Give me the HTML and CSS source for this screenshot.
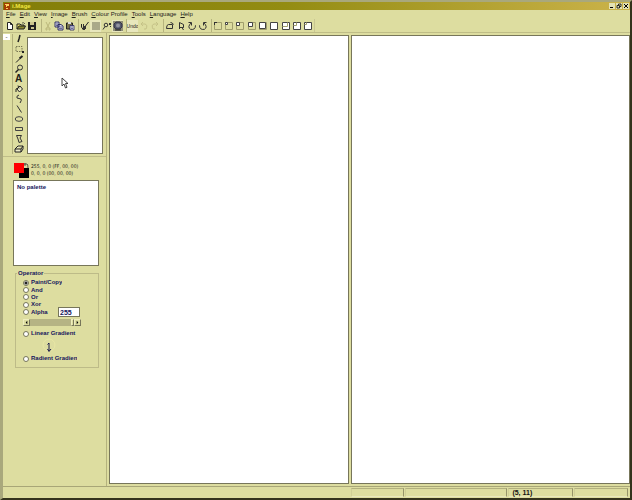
FILE: index.html
```html
<!DOCTYPE html>
<html lang="en">
<head>
<meta charset="utf-8">
<title>i.Mage</title>
<link rel="stylesheet" href="styles.css">
</head>
<body>
<div class="window">
  <header class="titlebar">
    <svg class="logo" viewBox="0 0 6 7"><path fill="#a43c00" d="M0 0h6v7H0z"/><path fill="#ffd060" d="M1 1h4v2H3v1H2V2H1zM2 5h2v1H2z"/></svg>
    <h1>i.Mage</h1>
    <div class="controls">
      <button aria-label="Minimise"><svg viewBox="0 0 6 6"><path d="M1 4h3v1H1z"/></svg></button>
      <button aria-label="Restore"><svg viewBox="0 0 6 6"><path fill="none" stroke="#000" stroke-width=".8" d="M2.500 2V1H5v2.500H4M1 2.500h2.500V5H1z"/></svg></button>
      <button aria-label="Close"><svg viewBox="0 0 6 6"><path stroke="#000" d="M1 1l4 4M5 1L1 5"/></svg></button>
    </div>
  </header>
  <nav class="menu">
    <a href="#"><u>F</u>ile</a><a href="#"><u>E</u>dit</a><a href="#"><u>V</u>iew</a><a href="#"><u>I</u>mage</a><a href="#"><u>B</u>rush</a><a href="#"><u>C</u>olour Profile</a><a href="#"><u>T</u>ools</a><a href="#"><u>L</u>anguage</a><a href="#"><u>H</u>elp</a>
  </nav>
  <div class="toolbar">
    <div class="group three">
      <button aria-label="New"><svg viewBox="0 0 10 10"><path fill="#fff" stroke="#222" d="M2.500 1.500h3l2 2v5h-5z"/><path fill="none" stroke="#222" d="M5.500 1.500v2h2"/></svg></button>
      <button aria-label="Open"><svg viewBox="0 0 10 10"><path fill="#e8e070" stroke="#222" d="M1 8V3h3l1 1h3v1.500"/><path fill="#89852c" stroke="#222" d="M1 8l2-3h6.500L8 8z"/><path fill="none" stroke="#222" stroke-width=".7" d="M6 2q2-1 3 1"/></svg></button>
      <button aria-label="Save"><svg viewBox="0 0 10 10"><path fill="#222" d="M1 1h8v8H1z"/><path fill="#ccc68e" d="M3 1h4v3H3zM4 6h3v2H4z"/></svg></button>
    </div>
    <div class="group three">
      <button aria-label="Cut"><svg viewBox="0 0 10 10"><path fill="none" stroke="#bcb97c" d="M3 1l3 6M7 1L4 7M3 7h1v2H3zM6 7h1v2H6z"/></svg></button>
      <button aria-label="Copy"><svg viewBox="0 0 10 10"><path fill="#d8d8e8" stroke="#23235e" stroke-width=".9" d="M1 1h4v5H1zM4 3.500h3l2 1.500v4H4z"/><path stroke="#23235e" stroke-width=".6" d="M2 3h2M2 4.500h2M5 6h3M5 7.500h3"/></svg></button>
      <button aria-label="Paste"><svg viewBox="0 0 10 10"><path fill="#77734a" stroke="#222" d="M1.500 2h6v6h-6z"/><path fill="#ddd" d="M3 1h3v2H3z"/><path fill="#e0e0ee" stroke="#23235e" stroke-width=".8" d="M5 4.500h4V9H5z"/><path stroke="#23235e" stroke-width=".6" d="M6 6h2M6 7.500h2"/></svg></button>
    </div>
    <div class="group four">
      <button aria-label="Brush"><svg viewBox="0 0 10 10"><path fill="none" stroke="#222" d="M1.500 3v3l2 3M8.500 1L5.500 5"/><path fill="#333" d="M3 3h1v2h2v3H5v1H3z"/></svg></button>
      <button class="raised" aria-label="Grid"><svg viewBox="0 0 10 10"><path fill="#aaa98a" d="M1 1h8v8H1z"/></svg></button>
      <button aria-label="Zoom"><svg viewBox="0 0 10 10"><path fill="none" stroke="#333" d="M1 8.500l2-3"/><circle cx="4" cy="4" r="1.800" fill="none" stroke="#333"/><path fill="#333" d="M7 2h2v2H7zM8 5h1v1H8z"/></svg></button>
      <button class="raised" aria-label="Screen"><svg viewBox="0 0 10 10"><path fill="#8f8e78" d="M0 0h10v10H0z"/><path fill="#55586c" stroke="#26263c" stroke-width=".8" d="M3 1h4l2 2v3L7 8H3L1 6V3z"/><circle cx="5" cy="4.500" r="2" fill="#9293a0"/><path stroke="#222" d="M2 9h6"/></svg></button>
    </div>
    <div class="group three">
      <button class="raised undo" aria-label="Undo history">Undo</button>
      <button aria-label="Undo"><svg viewBox="0 0 10 10"><path fill="none" stroke="#c5c287" d="M4 1L2 3l2 2M2 3h4q3 1 1 5H5"/></svg></button>
      <button aria-label="Redo"><svg viewBox="0 0 10 10"><path fill="none" stroke="#c5c287" d="M6 1l2 2-2 2M8 3H4q-3 1-1 5h2"/></svg></button>
    </div>
    <div class="group four">
      <button aria-label="Flip horizontally"><svg viewBox="0 0 10 10"><path fill="none" stroke="#333" d="M1.500 7.500h6M1.500 7.500q0-4 2-4h4v4M5.500 1.500q2 0 3 2"/></svg></button>
      <button aria-label="Flip vertically"><svg viewBox="0 0 10 10"><path fill="none" stroke="#333" d="M3.500 8V1.500l4 2v3h-4M6 6.500l1.500 2.500"/></svg></button>
      <button aria-label="Rotate left"><svg viewBox="0 0 10 10"><path fill="none" stroke="#333" d="M1.500 1.500h3v3M4 2Q0 6 3.500 8.300q5 1 5-4"/></svg></button>
      <button aria-label="Rotate right"><svg viewBox="0 0 10 10"><path fill="none" stroke="#333" d="M8.500 1.500h-3v3M6 2q4 4 .5 6.300-5 1-5-4"/></svg></button>
    </div>
    <div class="group nine">
      <button aria-label="Top left, small"><svg viewBox="0 0 10 10"><path class="ghost" d="M1.500 1.500h7v7h-7z"/><path fill="#333" d="M1 1h3v1H2v2H1z"/></svg></button>
      <button aria-label="Top, small"><svg viewBox="0 0 10 10"><path class="ghost" d="M1.500 1.500h7v7h-7z"/><path class="box" d="M1.500 1.500h2v2h-2z"/></svg></button>
      <button aria-label="Size 3"><svg viewBox="0 0 10 10"><path class="ghost" d="M1.500 1.500h7v7h-7z"/><path class="box" d="M1.500 1.500h3v3h-3z"/></svg></button>
      <button aria-label="Size 4"><svg viewBox="0 0 10 10"><path class="ghost" d="M1.500 1.500h7v7h-7z"/><path class="box" d="M1.500 1.500h4v4h-4z"/></svg></button>
      <button aria-label="Size 5"><svg viewBox="0 0 10 10"><path class="ghost" d="M1.500 1.500h7v7h-7z"/><path class="box" d="M1.500 1.500h6v6h-6z"/></svg></button>
      <button aria-label="Size 6"><svg viewBox="0 0 10 10"><path class="box" d="M1.500 1.500h7v7h-7z"/></svg></button>
      <button aria-label="Size 7"><svg viewBox="0 0 10 10"><path class="box" d="M1.500 1.500h7v7h-7z"/><path class="ghost" d="M1.500 5.500h5v-4"/></svg></button>
      <button aria-label="Size 8"><svg viewBox="0 0 10 10"><path class="box" d="M1.500 1.500h7v7h-7z"/><path class="ghost" d="M1.500 4.500h3v-3"/></svg></button>
      <button aria-label="Size 9"><svg viewBox="0 0 10 10"><path class="box" d="M1.500 1.500h7v7h-7z"/><path class="ghost" d="M1.500 3.500h2v-2"/></svg></button>
    </div>
  </div>
  <main class="work">
    <aside class="side">
      <section class="dock">
        <button class="collapse" aria-label="Collapse">-</button>
        <div class="tools">
          <button aria-label="Brush"><svg viewBox="0 0 10 10"><path stroke="#222" stroke-width="1.500" d="M6 1L5 5 4 8"/></svg></button>
          <button aria-label="Select"><svg viewBox="0 0 10 10"><path fill="none" stroke="#777652" stroke-dasharray="1.500 1" d="M2 2.500h6v5H2z"/><path fill="#222" d="M8 7h2v2H8z"/></svg></button>
          <button aria-label="Pick colour"><svg viewBox="0 0 10 10"><path stroke="#222" d="M2 8.500l4-4"/><path stroke="#222" stroke-width="2" d="M5.500 4.500L8.500 2"/></svg></button>
          <button aria-label="Magnify"><svg viewBox="0 0 10 10"><circle cx="6" cy="3.500" r="2.500" fill="none" stroke="#333"/><path stroke="#222" stroke-width="1.400" d="M4.500 5.500L1.500 8.500"/></svg></button>
          <button class="letter" aria-label="Text">A</button>
          <button aria-label="Fill"><svg viewBox="0 0 10 10"><path fill="#efeec8" stroke="#222" d="M3 5l3-3 2.500 3-3 3z"/><path fill="none" stroke="#222" d="M4 1.500l1 3M4 4L2 5v3"/></svg></button>
          <button aria-label="Freehand"><svg viewBox="0 0 10 10"><path fill="none" stroke="#333" d="M5 1Q2 2 3 4l4 1q1 1-1 4"/></svg></button>
          <button aria-label="Line"><svg viewBox="0 0 10 10"><path stroke="#333" d="M3 1.500l4.500 7"/></svg></button>
          <button aria-label="Ellipse"><svg viewBox="0 0 10 10"><ellipse cx="5" cy="5" rx="3.800" ry="2.300" fill="none" stroke="#444"/></svg></button>
          <button aria-label="Rectangle"><svg viewBox="0 0 10 10"><path fill="none" stroke="#444" d="M1.500 3.500h7v3h-7z"/></svg></button>
          <button aria-label="Polygon"><svg viewBox="0 0 10 10"><path fill="none" stroke="#333" d="M2.500 1.500h5L6 4l2 3.500-3 1L4 5z"/></svg></button>
          <button aria-label="Block"><svg viewBox="0 0 10 10"><path fill="#eeedc8" stroke="#222" d="M1 5l3-3h5v3L7 8H1zM1 5h6l2-3M7 5v3"/></svg></button>
        </div>
        <div class="preview"><svg class="cursor" viewBox="0 0 8 12"><path fill="#fff" stroke="#333" stroke-width=".9" d="M1 1v8l2-2 1.500 4L6 10.300 4.500 6.500H7z"/></svg></div>
      </section>
      <section class="colours">
        <div class="swatches"><i class="back"></i><i class="front"></i><svg class="swap" viewBox="0 0 5 5"><path fill="none" stroke="#333" stroke-width=".8" d="M1 0v3M0 1h3q1 0 1 4"/></svg></div>
        <p>255, 0, 0 (FF, 00, 00)<br>0, 0, 0 (00, 00, 00)</p>
      </section>
      <section class="palette">No palette</section>
      <fieldset class="operator">
        <legend>Operator</legend>
        <div class="modes">
          <label><input type="radio" name="op" checked><span>Paint/Copy</span></label>
          <label><input type="radio" name="op"><span>And</span></label>
          <label><input type="radio" name="op"><span>Or</span></label>
          <label><input type="radio" name="op"><span>Xor</span></label>
          <label><input type="radio" name="op"><span>Alpha</span></label>
          <input class="alpha" type="text" value="255" aria-label="Alpha value">
        </div>
        <div class="scroll">
          <button aria-label="Less"><svg viewBox="0 0 6 6"><path d="M4 1v4L2 3z"/></svg></button>
          <span></span>
          <button class="thumb" aria-label="Thumb"></button>
          <button aria-label="More"><svg viewBox="0 0 6 6"><path d="M2 1v4l2-2z"/></svg></button>
        </div>
        <label class="wide"><input type="radio" name="op"><span>Linear Gradient</span></label>
        <svg class="dial" viewBox="0 0 16 16"><circle cx="8" cy="7" r="6" fill="none" stroke="#e9e7a5"/><path fill="none" stroke="#18184c" d="M8 5v8M6.500 6.500L8 5M6.500 11L8 13.500 10 11"/></svg>
        <label class="wide"><input type="radio" name="op"><span>Radient Gradient</span></label>
      </fieldset>
    </aside>
    <section class="canvas" aria-label="Left image"></section>
    <section class="canvas" aria-label="Right image"></section>
  </main>
  <footer class="status"><span></span><span></span><span></span><span>(5, 11)</span><span></span></footer>
</div>
</body>
</html>
```
FILE: styles.css
```css
* { box-sizing: border-box; }

body {
  margin: 0;
  background: #dddda0;
  color: #222218;
  font: 6px/8px "Liberation Sans", Arial, sans-serif;
}

button {
  display: flex;
  align-items: center;
  justify-content: center;
  margin: 0;
  padding: 0;
  border: 0;
  background: none;
  color: inherit;
  font: inherit;
}

svg { display: block; }

.window {
  display: flex;
  flex-direction: column;
  height: 100vh;
  border: solid;
  border-width: 2px 2px 2px 3px;
  border-color: #a9a87c #34331d #34331d #a9a87c;
}

.titlebar {
  display: flex;
  align-items: center;
  gap: 2px;
  height: 8px;
  flex: none;
  padding-left: 1px;
  background: linear-gradient(90deg, #827d08, #938c12 45%, #cbb34a);
  color: #f0e640;
}

.logo { width: 6px; height: 7px; }

h1 {
  flex: 1;
  margin: 0;
  font-size: 6px;
  font-weight: bold;
}

.controls { display: flex; gap: 1px; padding-right: 1px; }

.controls button {
  width: 6px;
  height: 6px;
  background: #e2e1b4;
}

.controls svg { width: 6px; height: 6px; }

.menu {
  display: flex;
  gap: 4px;
  height: 9px;
  flex: none;
  padding-left: 3px;
}

.menu a { color: inherit; text-decoration: none; white-space: nowrap; }

.toolbar {
  display: flex;
  gap: 3px;
  height: 14px;
  flex: none;
  padding-left: 1px;
  border-bottom: 1px solid #bfbd86;
}

.group {
  display: grid;
  grid-auto-flow: column;
  grid-auto-columns: 1fr;
  align-items: center;
}

.group + .group { border-left: 1px solid #b5b37d; }

.three { width: 34px; }
.four { width: 45px; }
.nine { width: 104px; border-right: 1px solid #c9c792; }

.toolbar button { height: 12px; overflow: hidden; }
.toolbar svg { width: 10px; height: 10px; }
.toolbar .raised { background: #e8e7bd; }
.toolbar .undo { font-size: 5px; }

.ghost { fill: none; stroke: #a09e6c; }
.box { fill: #fff; stroke: #444; }

.work {
  display: grid;
  grid-template-columns: 104px 240fr 278fr;
  gap: 2px;
  flex: 1;
  min-height: 0;
  border-bottom: 1px solid #a8a677;
}

.side {
  border-right: 1px solid #b4b27d;
  overflow: hidden;
}

.canvas {
  margin: 2px 0;
  border: 1px solid #77765a;
  background: #fff;
}

.dock {
  display: grid;
  grid-template-columns: 8px 12px 78px;
  column-gap: 1px;
  height: 124px;
  padding-top: 1px;
  border-bottom: 1px solid #c0be89;
}

.collapse {
  width: 7px;
  height: 6px;
  background: #fff;
}

.tools { display: grid; grid-auto-rows: 1fr; height: 119px; }

.tools button { border-left: 1px solid #b2b07c; }
.tools svg { width: 10px; height: 10px; }
.tools .letter { font: bold 10px/10px "Liberation Sans", Arial, sans-serif; }

.preview {
  height: 117px;
  margin: 3px 0 0 2px;
  padding: 39px 0 0 33px;
  border: 1px solid #77765a;
  background: #fff;
}

.cursor { width: 8px; height: 12px; }

.colours {
  display: flex;
  gap: 2px;
  padding: 6px 0 0 11px;
}

.swatches { position: relative; width: 15px; height: 15px; }
.swatches i { position: absolute; width: 10px; height: 10px; }
.front { top: 0; left: 0; background: #f00; }
.back { right: 0; bottom: 0; background: #000; }
.swap { position: absolute; top: 0; right: 0; width: 5px; height: 5px; }

.colours p {
  margin: 0;
  font: 5px/7px "DejaVu Sans Condensed", "DejaVu Sans", sans-serif;
  white-space: nowrap;
}

.palette {
  height: 86px;
  margin: 2px 7px 0 10px;
  padding: 2px 3px;
  border: 1px solid #77765a;
  background: #fff;
  color: #15155c;
  font-weight: bold;
}

.operator {
  height: 99px;
  margin: 3px 7px 0 12px;
  padding: 2px 0 0 7px;
  border: 1px solid #bdbb88;
  min-width: 0;
  color: #15155c;
  font-weight: bold;
}

.operator legend { margin-left: -6px; padding: 0 1px; }

.modes {
  display: grid;
  grid-auto-rows: 1fr;
  position: relative;
  height: 37px;
}

.operator label {
  display: flex;
  align-items: center;
  gap: 2px;
  width: 39px;
}

.operator label.wide { width: 54px; height: 9px; }
.operator label span { flex: 1; overflow: hidden; white-space: nowrap; line-height: 7px; }

input[type="radio"] {
  appearance: none;
  flex: none;
  width: 6px;
  height: 6px;
  margin: 0;
  border: 1px solid #77765a;
  border-radius: 50%;
  background: #fff;
}

input[type="radio"]:checked { background: radial-gradient(#222 1px, #fff 2px); }

.alpha {
  position: absolute;
  left: 35px;
  bottom: -1px;
  width: 22px;
  height: 10px;
  padding: 0 1px;
  border: 1px solid #77765a;
  background: #fff;
  color: inherit;
  font: bold 7px/8px "Liberation Sans", Arial, sans-serif;
}

.scroll {
  display: flex;
  width: 58px;
  height: 7px;
  margin: 3px 0;
  background: #b5b384;
}

.scroll span { flex: 1; }

.scroll button {
  width: 7px;
  border: 1px solid #77765a;
  border-color: #efeebf #77765a #77765a #efeebf;
  background: #dddda0;
}

.scroll .thumb { width: 3px; }

.scroll svg { width: 5px; height: 5px; }

.dial { width: 16px; height: 16px; margin-left: 18px; }

.status {
  display: grid;
  grid-template-columns: 348fr 53fr 103fr 65fr 54fr;
  gap: 1px;
  height: 11px;
  flex: none;
  padding: 1px 2px 1px 0;
}

.status span {
  padding-left: 3px;
  border: 1px solid #b3b17e;
  border-color: #b3b17e #96946a #e8e7bd #d0cf96;
  color: #111;
  font-size: 7px;
  line-height: 7px;
  font-weight: bold;
}

.status span:first-child { border: 0; }
```
